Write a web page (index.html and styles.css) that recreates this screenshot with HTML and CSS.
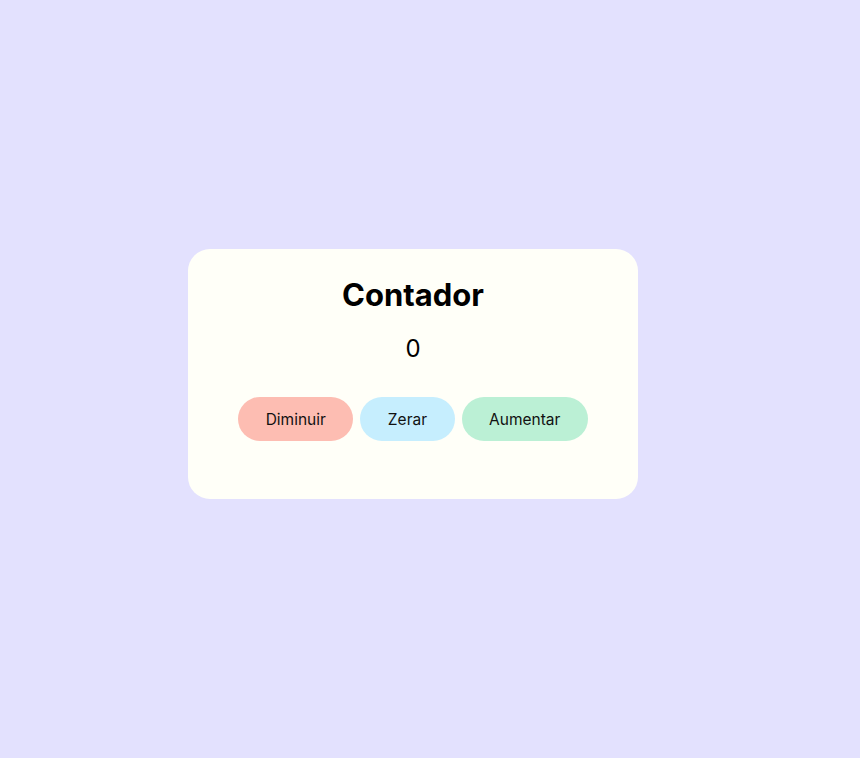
FILE: index.html
```html
<!DOCTYPE html>
<html lang="pt">
<head>
<meta charset="utf-8">
<title>Contador</title>
<link rel="stylesheet" href="styles.css">
</head>
<body>
<main class="page">
  <section class="card">
    <h1 class="title">Contador</h1>
    <p class="count">0</p>
    <div class="actions">
      <button class="btn btn-dec">Diminuir</button>
      <button class="btn btn-reset">Zerar</button>
      <button class="btn btn-inc">Aumentar</button>
    </div>
  </section>
</main>
</body>
</html>
```
FILE: styles.css
```css
html, body {
  margin: 0;
  padding: 0;
}
body {
  background: #e3e1fe;
  font-family: Inter, "Noto Sans", sans-serif;
  color: #000;
}
.page {
  width: 860px;
  height: 758px;
  display: flex;
  align-items: center;
  justify-content: center;
}
.card {
  box-sizing: border-box;
  width: 450px;
  height: 250px;
  margin-left: -34px;
  margin-top: -10px;
  background: #fffff8;
  border-radius: 22px;
  padding: 26px 0 0;
  display: flex;
  flex-direction: column;
  align-items: center;
}
.title {
  margin: 0;
  font-size: 31px;
  line-height: 39px;
  font-weight: 700;
}
.count {
  margin: 20px 0 0;
  font-size: 24px;
  line-height: 29px;
}
.actions {
  margin-top: 34px;
  display: flex;
  gap: 7px;
}
.btn {
  height: 44px;
  padding: 0 27.5px;
  border: none;
  border-radius: 22px;
  font-family: Inter, "Noto Sans", sans-serif;
  font-size: 15.5px;
  color: #111;
}
.btn-dec { background: #fdbdb2; }
.btn-reset { background: #c6eefe; }
.btn-inc { background: #bbf0d5; }
```
